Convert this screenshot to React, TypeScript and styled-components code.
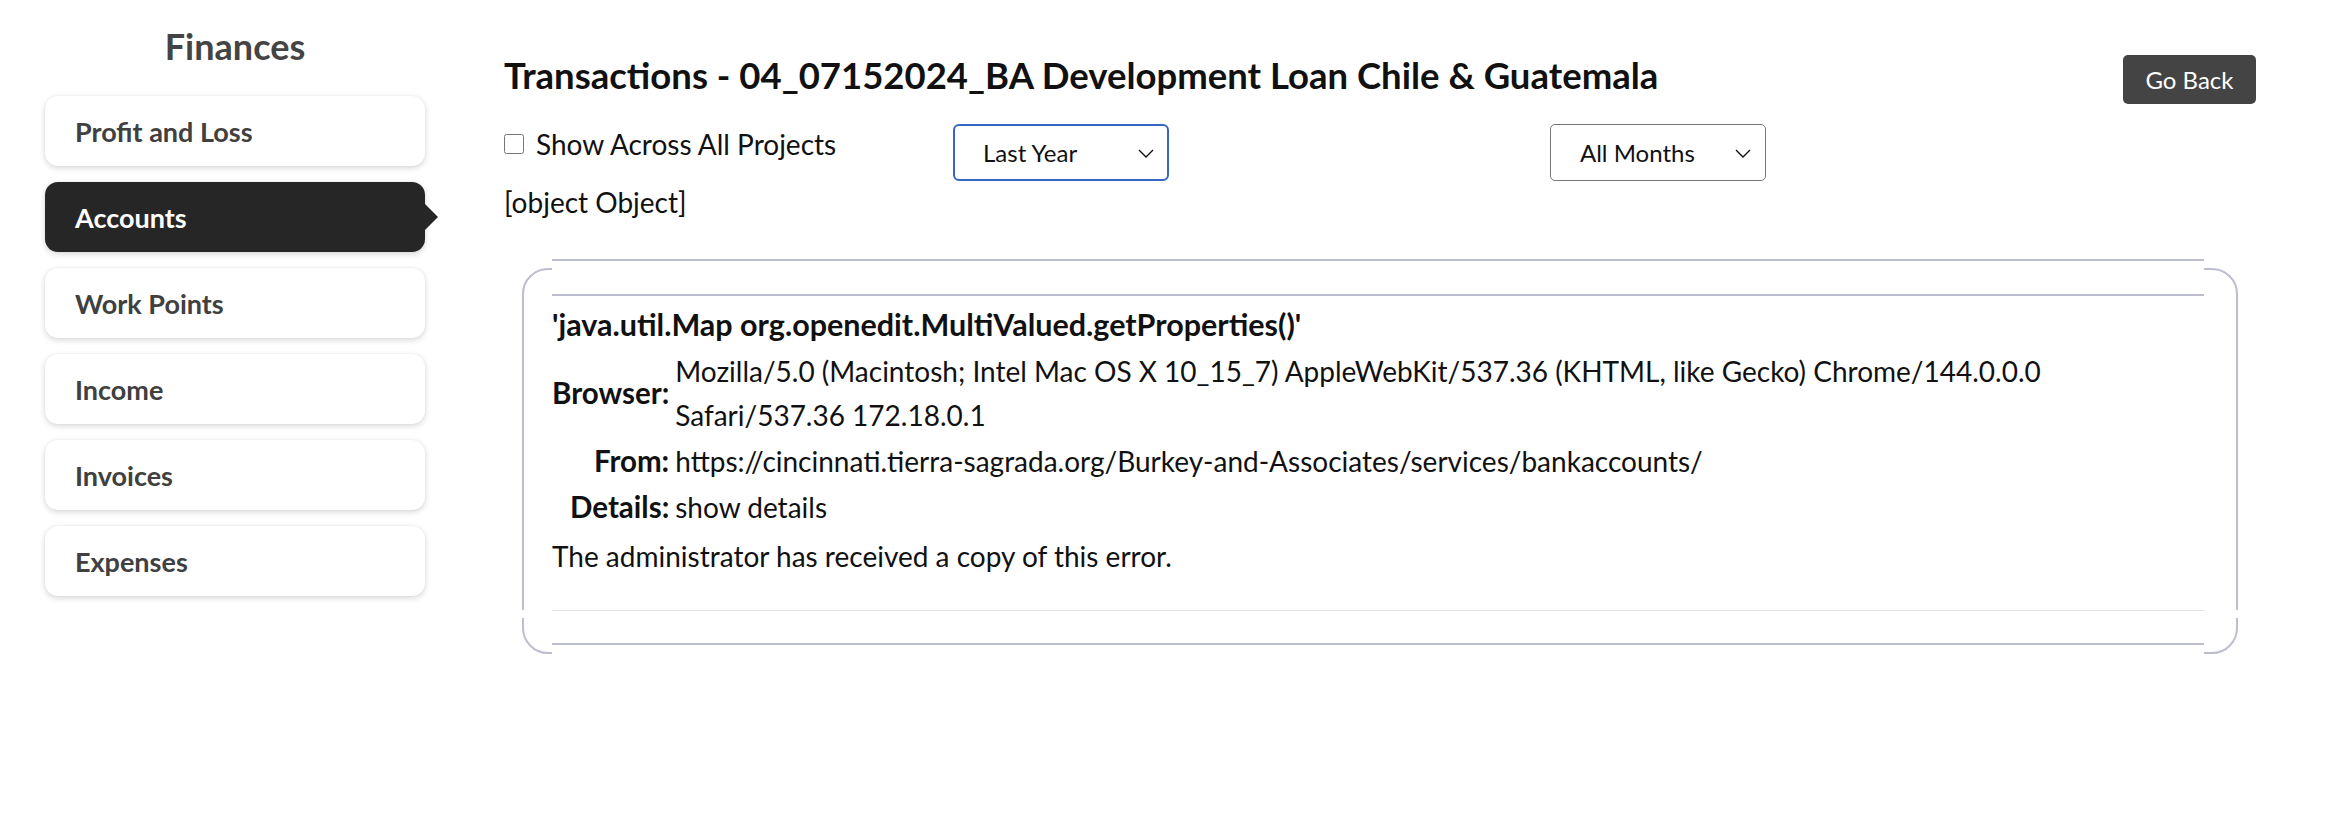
import React from 'react';
import styled, { createGlobalStyle, css } from 'styled-components';

const GlobalStyle = createGlobalStyle`
  html, body {
    margin: 0;
    padding: 0;
    background: #ffffff;
  }
  body {
    font-family: 'Lato', 'Liberation Sans', sans-serif;
    color: #111111;
  }
`;

const lineColor = '#bdbdd0';

const Page = styled.div`
  display: flex;
  align-items: flex-start;
  padding-left: 45px;
  min-height: 824px;
  box-sizing: border-box;
`;

const Sidebar = styled.nav`
  width: 380px;
  flex-shrink: 0;
  display: flex;
  flex-direction: column;
  gap: 16px;
`;

const SidebarTitle = styled.h2`
  margin: 26px 0 14px;
  text-align: center;
  font-size: 36px;
  line-height: 40px;
  font-weight: 700;
  color: #444444;
`;

const NavItem = styled.a<{ $active?: boolean }>`
  position: relative;
  display: flex;
  align-items: center;
  height: 70px;
  padding: 0 30px;
  border-radius: 13px;
  font-size: 27px;
  font-weight: 700;
  text-decoration: none;
  color: #404040;
  background: #ffffff;
  box-shadow: 0 2px 6px rgba(0, 0, 0, 0.16), 0 0 2px rgba(0, 0, 0, 0.06);
  cursor: pointer;

  ${(p) =>
    p.$active &&
    css`
      background: #262626;
      color: #ffffff;

      &::after {
        content: '';
        position: absolute;
        right: -13px;
        top: 50%;
        margin-top: -13px;
        border-left: 13px solid #262626;
        border-top: 13px solid transparent;
        border-bottom: 13px solid transparent;
      }
    `}
`;

const Main = styled.main`
  flex: 1;
  margin-left: 79px;
  margin-right: 90px;
  padding-top: 55px;
`;

const HeaderRow = styled.div`
  display: flex;
  align-items: flex-start;
  justify-content: space-between;
`;

const Title = styled.h1`
  margin: -2px 0 0;
  font-size: 36.5px;
  line-height: 44px;
  font-weight: 700;
  color: #111111;
`;

const GoBack = styled.button`
  height: 49px;
  width: 133px;
  border: none;
  border-radius: 5px;
  background: #444444;
  color: #ffffff;
  font-family: inherit;
  font-size: 24px;
  cursor: pointer;
`;

const Controls = styled.div`
  display: grid;
  grid-template-columns: 449px 597px auto;
  align-items: start;
  margin-top: 20px;
`;

const CheckLabel = styled.label`
  display: flex;
  align-items: center;
  gap: 12px;
  height: 38px;
  font-size: 28px;
  margin-top: 1px;
`;

const Check = styled.input`
  width: 20px;
  height: 20px;
  margin: 0;
`;

const SelectWrap = styled.div`
  position: relative;
  width: 216px;
  height: 57px;
`;

const Select = styled.select<{ $focused?: boolean }>`
  appearance: none;
  width: 100%;
  height: 100%;
  padding: 0 40px 0 29px;
  font-family: inherit;
  font-size: 24px;
  color: #111111;
  background: #ffffff;
  border: 1px solid #767676;
  border-radius: 5px;
  outline: none;

  ${(p) =>
    p.$focused &&
    css`
      border: 2.5px solid #3466c2;
      border-radius: 6px;
      padding-left: 28px;
    `}
`;

const Chevron = styled.svg`
  position: absolute;
  right: 15px;
  top: 50%;
  width: 16px;
  height: 9px;
  margin-top: -4px;
  pointer-events: none;
`;

const Note = styled.div`
  font-size: 28px;
  line-height: 40px;
  margin-top: 1px;
`;

const ErrorBox = styled.section`
  margin: 46px 18px 0;
  padding: 0 32px 0 28px;
  border: 2px solid ${lineColor};
  border-radius: 26px;
`;

const ErrorPanel = styled.div`
  margin: -11px 0 -2px;
  background: #ffffff;
  border-top: 2px solid ${lineColor};
  padding-bottom: 9px;
`;

const Rule = styled.div`
  margin-top: 33px;
  border-top: 2px solid ${lineColor};
`;

/* light separator; its white ends also break the box's side borders, as in the original */
const SoftRule = styled.div`
  margin: 32px -34px 0 -30px;
  height: 8px;
  background-color: #ffffff;
  background-image: linear-gradient(#e4e4ea, #e4e4ea);
  background-repeat: no-repeat;
  background-size: calc(100% - 64px) 1px;
  background-position: 30px 0;

  & + ${Rule} {
    margin-top: 25px;
  }
`;

const Body = styled.div`
  font-size: 28px;
  line-height: 44px;
`;

const ErrorTitle = styled.div`
  margin-top: 6px;
  font-size: 30.5px;
  font-weight: 700;
`;

const InfoTable = styled.table`
  margin-top: 2px;
  border-collapse: collapse;
  font-size: inherit;
  line-height: inherit;
`;

const LabelCell = styled.td`
  width: 117px;
  padding: 1px 6px 1px 0;
  text-align: right;
  font-size: 29.5px;
  font-weight: 700;
  white-space: nowrap;
  vertical-align: middle;
`;

const ValueCell = styled.td`
  padding: 1px 0;
`;

const Footer = styled.div`
  margin-top: 4px;
`;

const navItems = ['Profit and Loss', 'Accounts', 'Work Points', 'Income', 'Invoices', 'Expenses'];

function Dropdown({ value, options, focused }: { value: string; options: string[]; focused?: boolean }) {
  return (
    <SelectWrap>
      <Select $focused={focused} defaultValue={value}>
        {options.map((o) => (
          <option key={o} value={o}>
            {o}
          </option>
        ))}
      </Select>
      <Chevron viewBox="0 0 16 9" fill="none">
        <path d="M1 1l7 7 7-7" stroke="#111" strokeWidth="1.4" />
      </Chevron>
    </SelectWrap>
  );
}

export default function App() {
  return (
    <>
      <GlobalStyle />
      <Page>
        <Sidebar>
          <SidebarTitle>Finances</SidebarTitle>
          {navItems.map((item) => (
            <NavItem key={item} $active={item === 'Accounts'}>
              {item}
            </NavItem>
          ))}
        </Sidebar>

        <Main>
          <HeaderRow>
            <Title>Transactions - 04_07152024_BA Development Loan Chile &amp; Guatemala</Title>
            <GoBack>Go Back</GoBack>
          </HeaderRow>

          <Controls>
            <CheckLabel>
              <Check type="checkbox" />
              Show Across All Projects
            </CheckLabel>
            <Dropdown focused value="Last Year" options={['Last Year', 'This Year', 'All Years']} />
            <Dropdown value="All Months" options={['All Months', 'January', 'February']} />
          </Controls>

          <Note>[object Object]</Note>

          <ErrorBox>
            <ErrorPanel>
              <Rule />
              <Body>
                <ErrorTitle>'java.util.Map org.openedit.MultiValued.getProperties()'</ErrorTitle>
                <InfoTable>
                  <tbody>
                    <tr>
                      <LabelCell>Browser:</LabelCell>
                      <ValueCell>
                        Mozilla/5.0 (Macintosh; Intel Mac OS X 10_15_7) AppleWebKit/537.36 (KHTML, like Gecko) Chrome/144.0.0.0
                        <br />
                        Safari/537.36 172.18.0.1
                      </ValueCell>
                    </tr>
                    <tr>
                      <LabelCell>From:</LabelCell>
                      <ValueCell>https://cincinnati.tierra-sagrada.org/Burkey-and-Associates/services/bankaccounts/</ValueCell>
                    </tr>
                    <tr>
                      <LabelCell>Details:</LabelCell>
                      <ValueCell>show details</ValueCell>
                    </tr>
                  </tbody>
                </InfoTable>
                <Footer>The administrator has received a copy of this error.</Footer>
              </Body>
              <SoftRule />
              <Rule />
            </ErrorPanel>
          </ErrorBox>
        </Main>
      </Page>
    </>
  );
}
